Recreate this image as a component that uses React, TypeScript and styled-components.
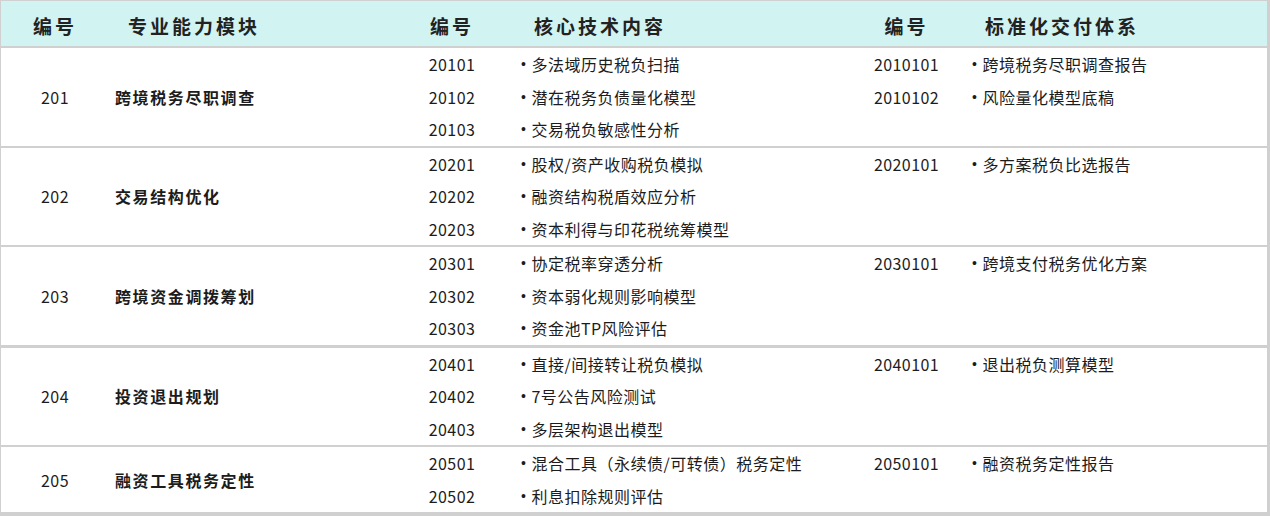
import React from 'react';
import styled, { createGlobalStyle } from 'styled-components';

type Pair = [string, string];

interface Group {
  code: string;
  name: string;
  items: Pair[];
  deliverables: Pair[];
  thick?: boolean;
}

const groups: Group[] = [
  {
    code: '201',
    name: '跨境税务尽职调查',
    items: [
      ['20101', '多法域历史税负扫描'],
      ['20102', '潜在税务负债量化模型'],
      ['20103', '交易税负敏感性分析'],
    ],
    deliverables: [
      ['2010101', '跨境税务尽职调查报告'],
      ['2010102', '风险量化模型底稿'],
    ],
  },
  {
    code: '202',
    name: '交易结构优化',
    items: [
      ['20201', '股权/资产收购税负模拟'],
      ['20202', '融资结构税盾效应分析'],
      ['20203', '资本利得与印花税统筹模型'],
    ],
    deliverables: [['2020101', '多方案税负比选报告']],
  },
  {
    code: '203',
    name: '跨境资金调拨筹划',
    items: [
      ['20301', '协定税率穿透分析'],
      ['20302', '资本弱化规则影响模型'],
      ['20303', '资金池TP风险评估'],
    ],
    deliverables: [['2030101', '跨境支付税务优化方案']],
    thick: true,
  },
  {
    code: '204',
    name: '投资退出规划',
    items: [
      ['20401', '直接/间接转让税负模拟'],
      ['20402', '7号公告风险测试'],
      ['20403', '多层架构退出模型'],
    ],
    deliverables: [['2040101', '退出税负测算模型']],
  },
  {
    code: '205',
    name: '融资工具税务定性',
    items: [
      ['20501', '混合工具（永续债/可转债）税务定性'],
      ['20502', '利息扣除规则评估'],
    ],
    deliverables: [['2050101', '融资税务定性报告']],
  },
];

const GlobalStyle = createGlobalStyle`
  html, body {
    margin: 0;
    padding: 0;
    background: #d0d0d0;
  }
  body {
    font-family: "Noto Sans CJK SC", "Noto Sans", sans-serif;
    color: #1c1c1c;
  }
`;

const Table = styled.div`
  width: 1266px;
  margin: 1px 0 0 1px;
  background: #ffffff;
`;

const HeaderRow = styled.div`
  display: grid;
  grid-template-columns: 108px 301px 84px 360px 105px 1fr;
  height: 45px;
  background: #d1f3f1;
  border-bottom: 2px solid #d0d0d0;
`;

const HeadCell = styled.div<{ $center?: boolean; $pad?: number }>`
  display: flex;
  align-items: center;
  justify-content: ${(p) => (p.$center ? 'center' : 'flex-start')};
  padding: 3px 0 0 ${(p) => p.$pad ?? 0}px;
  font-size: 19px;
  font-weight: 700;
  letter-spacing: 3px;
  color: #222;
`;

const GroupRow = styled.div<{ $thick?: boolean }>`
  display: grid;
  grid-template-columns: 108px 301px 444px 1fr;
  border-bottom: ${(p) => (p.$thick ? 3 : 2)}px solid #d0d0d0;
`;

const CodeCell = styled.div`
  display: flex;
  align-items: center;
  justify-content: center;
  font-size: 16px;
  letter-spacing: 0.4px;
`;

const NameCell = styled.div`
  display: flex;
  align-items: center;
  padding-left: 6px;
  font-size: 16px;
  font-weight: 700;
  letter-spacing: 1.6px;
`;

const SubList = styled.div<{ $codeWidth: number }>`
  display: grid;
  grid-template-columns: ${(p) => p.$codeWidth}px 1fr;
  grid-auto-rows: 32.5px;
  align-content: start;
`;

const SubCode = styled.div`
  display: flex;
  align-items: center;
  justify-content: center;
  font-size: 16px;
  letter-spacing: 0.4px;
`;

const SubText = styled.div<{ $pad: number }>`
  display: flex;
  align-items: center;
  padding-left: ${(p) => p.$pad}px;
  font-size: 16px;
  letter-spacing: 0.5px;
  white-space: nowrap;
`;

const Bullet = styled.span`
  font-family: "Liberation Sans", sans-serif;
  font-size: 14px;
  margin-right: 5px;
`;

export default function App() {
  return (
    <>
      <GlobalStyle />
      <Table>
        <HeaderRow>
          <HeadCell $center>编号</HeadCell>
          <HeadCell $pad={19}>专业能力模块</HeadCell>
          <HeadCell $center>编号</HeadCell>
          <HeadCell $pad={40}>核心技术内容</HeadCell>
          <HeadCell $center>编号</HeadCell>
          <HeadCell $pad={26}>标准化交付体系</HeadCell>
        </HeaderRow>
        {groups.map((g) => (
          <GroupRow key={g.code} $thick={g.thick}>
            <CodeCell>{g.code}</CodeCell>
            <NameCell>{g.name}</NameCell>
            <SubList $codeWidth={84}>
              {g.items.map(([c, t]) => (
                <React.Fragment key={c}>
                  <SubCode>{c}</SubCode>
                  <SubText $pad={27}>
                    <Bullet>•</Bullet>
                    {t}
                  </SubText>
                </React.Fragment>
              ))}
            </SubList>
            <SubList $codeWidth={105}>
              {g.deliverables.map(([c, t]) => (
                <React.Fragment key={c}>
                  <SubCode>{c}</SubCode>
                  <SubText $pad={13}>
                    <Bullet>•</Bullet>
                    {t}
                  </SubText>
                </React.Fragment>
              ))}
            </SubList>
          </GroupRow>
        ))}
      </Table>
    </>
  );
}
